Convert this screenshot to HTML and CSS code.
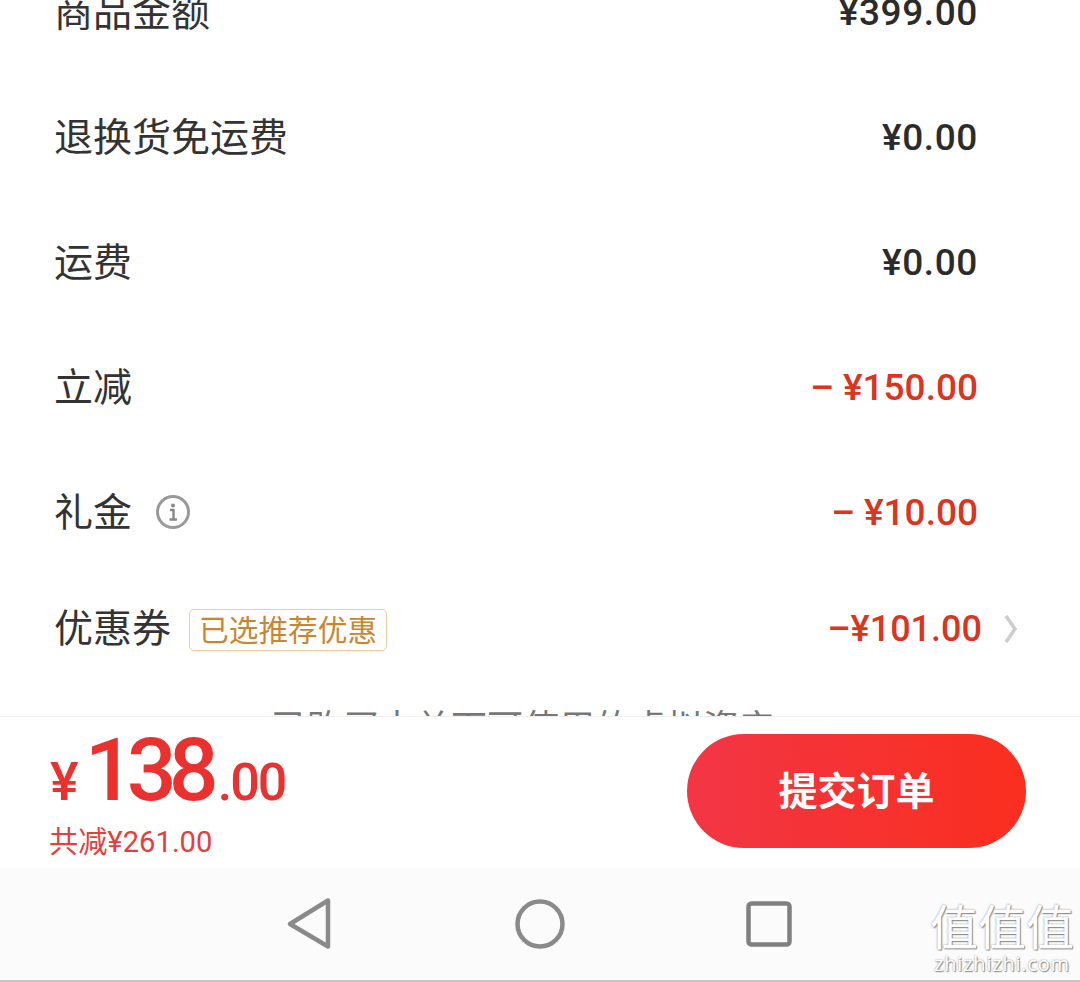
FILE: index.html
```html
<!DOCTYPE html>
<html lang="zh-CN">
<head>
    <meta charset="UTF-8">
    <meta name="viewport" content="width=device-width, initial-scale=1.0">
    <title>提交订单</title>
    <link rel="stylesheet" href="styles.css">
</head>
<body>
    <div class="screen">
        <div class="content">
            <div class="row">
                <span class="label">商品金额</span>
                <span class="amount">¥399.00</span>
            </div>
            <div class="row">
                <span class="label">退换货免运费</span>
                <span class="amount">¥0.00</span>
            </div>
            <div class="row">
                <span class="label">运费</span>
                <span class="amount">¥0.00</span>
            </div>
            <div class="row">
                <span class="label">立减</span>
                <span class="amount red"><span class="minus">–</span>¥150.00</span>
            </div>
            <div class="row">
                <div class="label-group">
                    <span class="label">礼金</span>
                    <svg class="info-icon" width="36" height="36" viewBox="0 0 36 36" fill="none">
                        <circle cx="18" cy="18" r="15.5" stroke="#999" stroke-width="3"/>
                        <circle cx="18" cy="11.5" r="2" fill="#888"/>
                        <path d="M15 16h3.5v9M14.5 25.5h7.5" stroke="#888" stroke-width="2.4"/>
                    </svg>
                </div>
                <span class="amount red"><span class="minus">–</span>¥10.00</span>
            </div>
            <div class="row row-coupon">
                <div class="label-group">
                    <span class="label">优惠券</span>
                    <span class="tag">已选推荐优惠</span>
                </div>
                <div class="coupon-right">
                    <span class="amount red">–¥101.00</span>
                    <svg class="chevron" width="16" height="30" viewBox="0 0 16 30" fill="none">
                        <path d="M3 2l9 13-9 13" stroke="#cdcdcd" stroke-width="3.5"/>
                    </svg>
                </div>
            </div>
            <div class="note">已购买本单下可使用的虚拟资产</div>
        </div>

        <div class="bottom-bar">
            <div class="price-box">
                <div class="price"><span class="yen">¥</span><span class="big">138</span><span class="cents">.00</span></div>
                <div class="saved">共减¥261.00</div>
            </div>
            <div class="submit">提交订单</div>
        </div>

        <div class="nav-bar">
            <svg width="48" height="54" viewBox="0 0 48 54" fill="none">
                <path d="M43 3.5v46L5 27z" stroke="#8a8a8a" stroke-width="4.5" stroke-linejoin="round"/>
            </svg>
            <svg width="52" height="52" viewBox="0 0 52 52" fill="none">
                <circle cx="26" cy="26" r="22.5" stroke="#8a8a8a" stroke-width="4.5"/>
            </svg>
            <svg width="46" height="46" viewBox="0 0 46 46" fill="none">
                <rect x="2.5" y="2.5" width="41" height="41" rx="3" stroke="#808080" stroke-width="4.5"/>
            </svg>
        </div>

        <div class="watermark">
            <div class="wm-chars">值值值</div>
            <div class="wm-url">zhizhizhi.com</div>
        </div>
    </div>
</body>
</html>
```

FILE: styles.css
```css
/* General Styles */
body {
    margin: 0;
    padding: 0;
    background-color: #FFFFFF;
    font-family: "Noto Sans CJK SC", Roboto, sans-serif;
}
.screen {
    position: relative;
    width: 1080px;
    height: 982px;
    overflow: hidden;
    display: flex;
    flex-direction: column;
}

/* Order rows */
.content {
    height: 716px;
    flex: none;
    overflow: hidden;
    padding: 0 102px 0 54px;
    box-sizing: border-box;
}
.row {
    height: 125px;
    display: flex;
    align-items: center;
    justify-content: space-between;
}
.row:first-child {
    margin-top: -50px;
}
.row-coupon {
    height: 107px;
}
.label-group {
    display: flex;
    align-items: center;
}
.label {
    font-size: 39px;
    line-height: 50px;
    margin-bottom: 8px;
    color: #333333;
}
.amount {
    font-family: Roboto, sans-serif;
    font-weight: 500;
    font-size: 37px;
    line-height: 50px;
    letter-spacing: 0.6px;
    color: #2B2B2B;
}
.amount.red {
    letter-spacing: 0;
    color: #D9351F;
}
.minus {
    margin-right: 9px;
}
.info-icon {
    margin-left: 23px;
    margin-bottom: 2px;
}
.tag {
    margin-left: 18px;
    margin-top: 2px;
    padding: 0 9px;
    height: 42px;
    line-height: 38px;
    box-sizing: border-box;
    border: 1px solid #EBCB9F;
    border-radius: 5px;
    font-size: 29.7px;
    color: #C9862F;
}
.coupon-right {
    display: flex;
    align-items: center;
    margin-right: -41px;
}
.coupon-right .amount {
    font-size: 36px;
    margin-right: 21px;
}
.note {
    height: 50px;
    margin-top: 18px;
    padding-left: 217px;
    font-size: 36px;
    line-height: 50px;
    white-space: nowrap;
    color: #777777;
}

/* Price bar */
.bottom-bar {
    height: 152px;
    flex: none;
    box-sizing: border-box;
    border-top: 1px solid #EEEEEE;
    padding: 0 54px 0 49px;
    display: flex;
    align-items: center;
    justify-content: space-between;
    background-color: #FFFFFF;
}
.price-box {
    align-self: flex-start;
    padding-top: 11px;
}
.price {
    height: 97px;
    padding-left: 1px;
    font-family: Roboto, sans-serif;
    font-weight: 500;
    color: #E9322F;
    line-height: 84px;
    white-space: nowrap;
}
.yen {
    font-size: 54px;
    margin-right: 6px;
}
.big {
    font-size: 88px;
    letter-spacing: -8px;
}
.cents {
    font-size: 52px;
    margin-left: 7px;
    letter-spacing: -2px;
}
.saved {
    font-family: Roboto, "Noto Sans CJK SC", sans-serif;
    font-size: 29.2px;
    line-height: 34px;
    color: #E2403F;
}
.submit {
    width: 339px;
    height: 114px;
    margin-bottom: 4px;
    border-radius: 57px;
    background: linear-gradient(90deg, #F23645, #FA2E1E);
    color: #FFFFFF;
    font-size: 39px;
    font-weight: 700;
    line-height: 108px;
    text-align: center;
}

/* System navigation */
.nav-bar {
    flex: 1;
    box-sizing: border-box;
    border-bottom: 2px solid #C8C8C8;
    background-color: #FBFBFB;
    padding: 0 288px 0 285px;
    display: flex;
    align-items: center;
    justify-content: space-between;
}
.watermark {
    position: absolute;
    left: 930px;
    top: 896px;
    width: 144px;
    text-align: center;
    color: #FFFFFF;
    text-shadow: 1px 1px 1px #8A8A8A, 0 0 2px #8A8A8A;
}
.wm-chars {
    height: 56px;
    font-size: 48px;
    line-height: 56px;
}
.wm-url {
    font-family: "Open Sans", sans-serif;
    font-size: 20px;
    line-height: 24px;
    letter-spacing: 0.8px;
}
```
